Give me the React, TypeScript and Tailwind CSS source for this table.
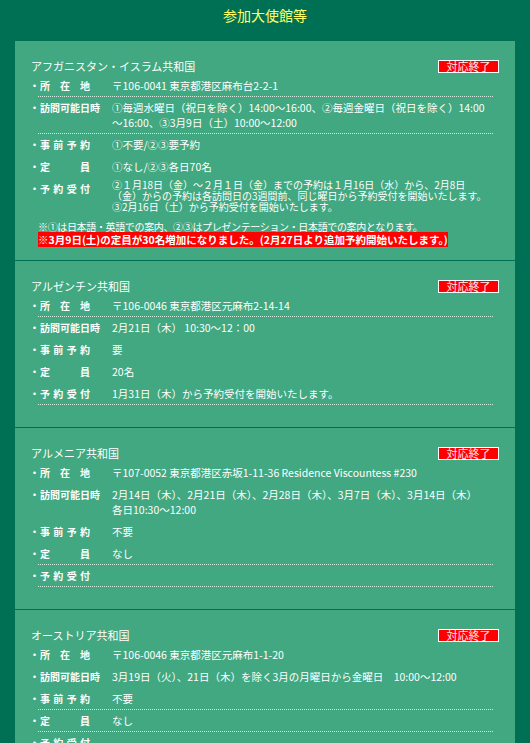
import type { ReactNode } from 'react'

type Row = {
  label: string
  spaced?: boolean
  value: ReactNode
  dotted?: boolean
  tight?: boolean
}

type Embassy = {
  name: string
  rows: Row[]
  notes?: boolean
}

const embassies: Embassy[] = [
  {
    name: 'アフガニスタン・イスラム共和国',
    notes: true,
    rows: [
      { label: '所在地', spaced: true, value: '〒106-0041 東京都港区麻布台2-2-1', dotted: true },
      {
        label: '訪問可能日時',
        value: (
          <>
            ①毎週水曜日（祝日を除く）14:00〜16:00、②毎週金曜日（祝日を除く）14:00
            <br />
            〜16:00、③3月9日（土）10:00〜12:00
          </>
        ),
        dotted: true
      },
      { label: '事前予約', spaced: true, value: '①不要/②③要予約' },
      { label: '定員', spaced: true, value: '①なし/②③各日70名' },
      {
        label: '予約受付',
        spaced: true,
        tight: true,
        value: (
          <>
            ②１月18日（金）～２月１日（金）までの予約は１月16日（水）から、2月8日
            <br />
            （金）からの予約は各訪問日の3週間前、同じ曜日から予約受付を開始いたします。
            <br />
            ③2月16日（土）から予約受付を開始いたします。
          </>
        )
      }
    ]
  },
  {
    name: 'アルゼンチン共和国',
    rows: [
      { label: '所在地', spaced: true, value: '〒106-0046 東京都港区元麻布2-14-14', dotted: true },
      { label: '訪問可能日時', value: '2月21日（木） 10:30〜12：00' },
      { label: '事前予約', spaced: true, value: '要' },
      { label: '定員', spaced: true, value: '20名' },
      { label: '予約受付', spaced: true, value: '1月31日（木）から予約受付を開始いたします。', dotted: true }
    ]
  },
  {
    name: 'アルメニア共和国',
    rows: [
      { label: '所在地', spaced: true, value: '〒107-0052 東京都港区赤坂1-11-36 Residence Viscountess #230' },
      {
        label: '訪問可能日時',
        value: (
          <>
            2月14日（木）、2月21日（木）、2月28日（木）、3月7日（木）、3月14日（木）
            <br />
            各日10:30〜12:00
          </>
        )
      },
      { label: '事前予約', spaced: true, value: '不要' },
      { label: '定員', spaced: true, value: 'なし', dotted: true },
      { label: '予約受付', spaced: true, value: '', dotted: true }
    ]
  },
  {
    name: 'オーストリア共和国',
    rows: [
      { label: '所在地', spaced: true, value: '〒106-0046 東京都港区元麻布1-1-20' },
      { label: '訪問可能日時', value: '3月19日（火）、21日（木）を除く3月の月曜日から金曜日　10:00〜12:00' },
      { label: '事前予約', spaced: true, value: '不要', dotted: true },
      { label: '定員', spaced: true, value: 'なし', dotted: true },
      { label: '予約受付', spaced: true, value: '' }
    ]
  }
]

function Label({ text, spaced }: { text: string; spaced?: boolean }) {
  return (
    <div className="flex w-[74px] shrink-0 text-[10px] leading-[15px] font-bold">
      <span className="-ml-[9px] w-[11px] text-center">・</span>
      {spaced ? (
        <span className="flex w-[50px] justify-between">
          {text.split('').map((c, i) => (
            <span key={i}>{c}</span>
          ))}
        </span>
      ) : (
        <span>{text}</span>
      )}
    </div>
  )
}

function InfoRow({ row }: { row: Row }) {
  const border = row.dotted ? 'border-dotted border-[#d4ece0]' : 'border-transparent'
  if (row.tight) {
    return (
      <div className={`flex pt-[1px] pb-[3px] border-b ${border}`}>
        <div className="mt-[2px]">
          <Label text={row.label} spaced={row.spaced} />
        </div>
        <div className="flex-1 whitespace-nowrap text-[10px] leading-[11px]">{row.value}</div>
      </div>
    )
  }
  return (
    <div className={`flex py-[3px] border-b ${border}`}>
      <Label text={row.label} spaced={row.spaced} />
      <div className="flex-1 min-h-[15px] whitespace-nowrap text-[10.5px] leading-[15px]">{row.value}</div>
    </div>
  )
}

export default function App() {
  return (
    <div className="min-h-screen bg-[#007055] font-['Noto_Sans_CJK_JP',sans-serif] text-white">
      <h1 className="pt-[5px] text-center text-[14px] leading-[20px] text-[#ffff66]">参加大使館等</h1>
      <div className="mx-[15px] mt-[16px] bg-[#41a881]">
        {embassies.map((e, idx) => (
          <section
            key={e.name}
            className={`px-[16px] pt-[17px] ${idx === 0 ? 'pb-[14px]' : 'pb-[22px] border-t border-[#007055]'}`}
          >
            <div className="flex h-[16px] items-center justify-between">
              <span className="text-[11px] leading-[16px]">{e.name}</span>
              <span className="flex h-[13px] w-[61px] items-center justify-center border border-white bg-[#ff0000] text-[11px] leading-[11px] text-[#ffeaea]">
                対応終了
              </span>
            </div>
            <div className="ml-[7px] mr-[6px] mt-[1px]">
              {e.rows.map((r) => (
                <InfoRow key={r.label} row={r} />
              ))}
            </div>
            {e.notes && (
              <div className="ml-[7px] mt-[4px] whitespace-nowrap leading-[13px]">
                <div className="text-[10px] tracking-[-0.35px]">
                  ※①は日本語・英語での案内、②③はプレゼンテーション・日本語での案内となります。
                </div>
                <div className="text-[10.5px]">
                  <span className="bg-[#ff0000] font-bold">
                    ※3月9日(土)の定員が30名増加になりました。(2月27日より追加予約開始いたします。)
                  </span>
                </div>
              </div>
            )}
          </section>
        ))}
      </div>
    </div>
  )
}
